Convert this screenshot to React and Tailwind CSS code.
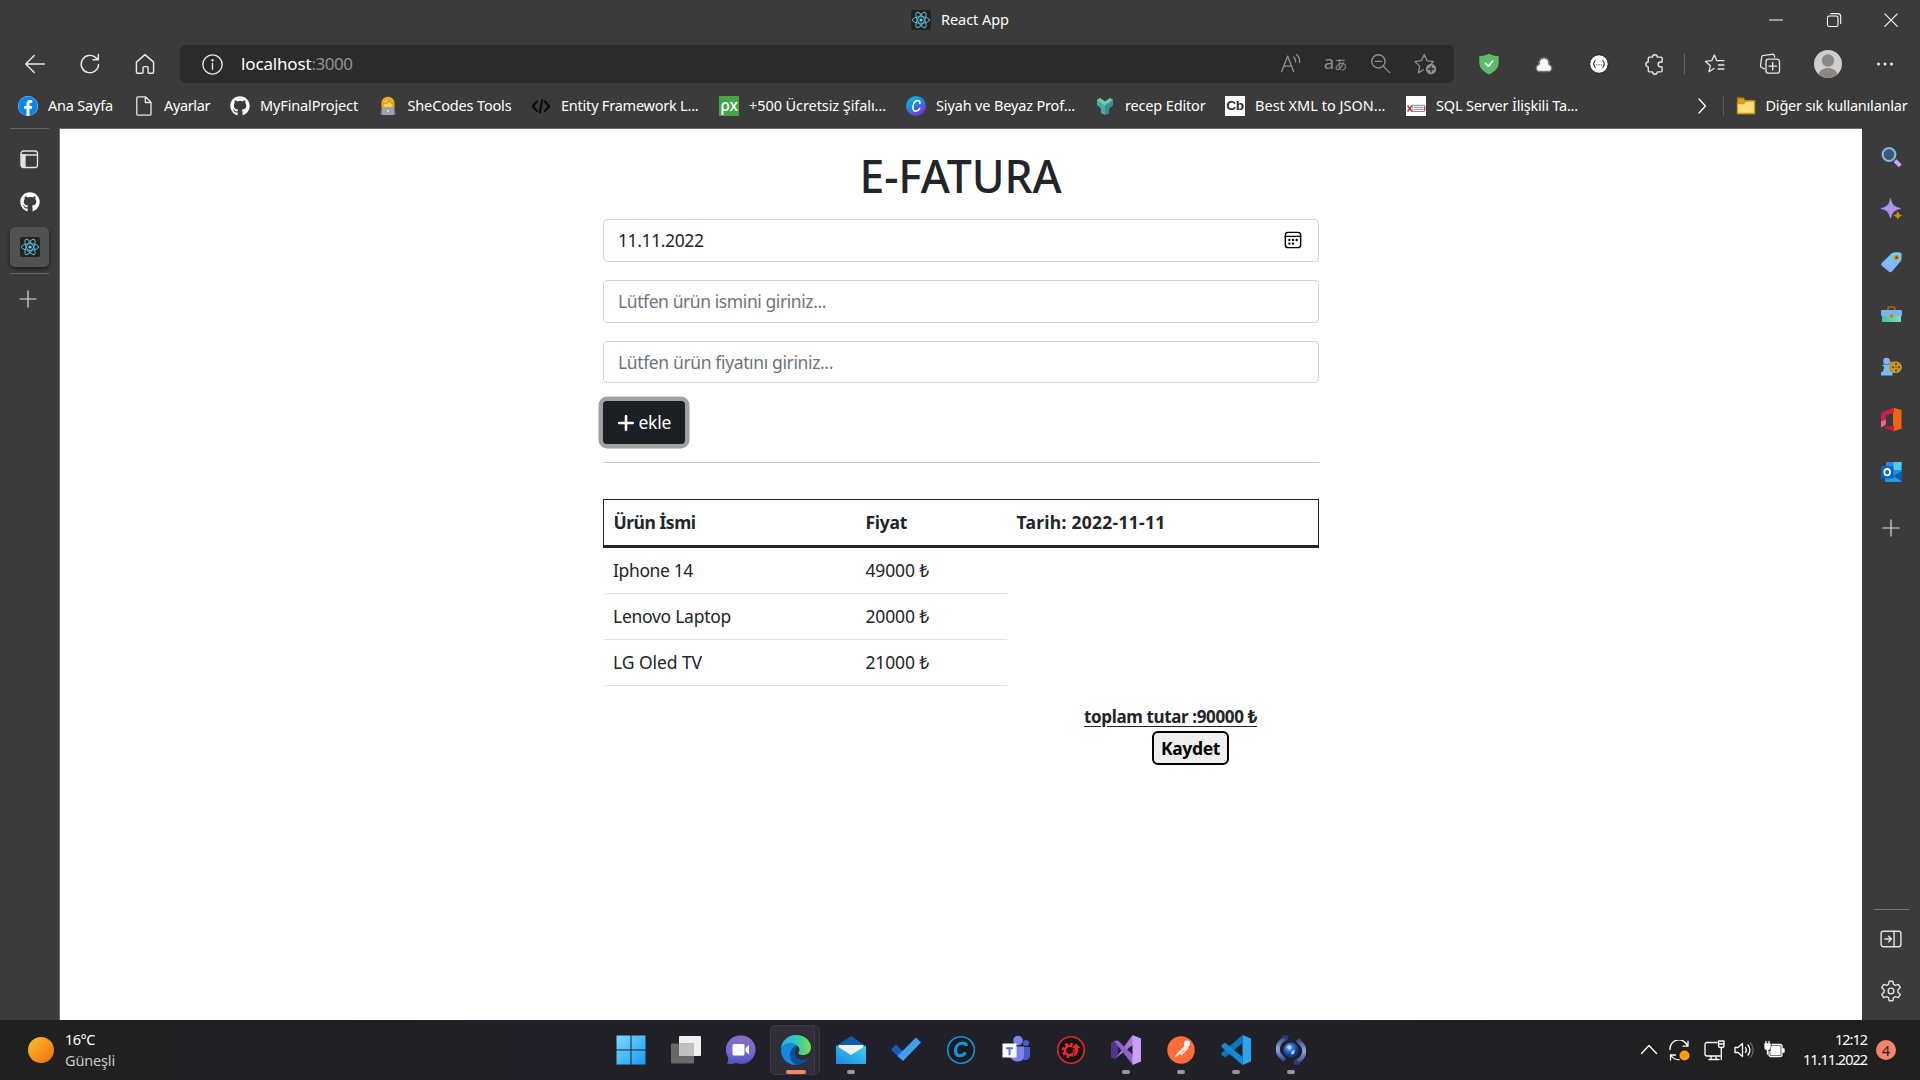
import { useLayoutEffect, useRef, useState } from "react";
import { FaGithub, FaFacebook } from "react-icons/fa";

/* Text run that is tracked to occupy the given width. */
function T({ w, className = "", children }) {
  const ref = useRef(null);
  const [ls, setLs] = useState(0);
  useLayoutEffect(() => {
    const n = ref.current.textContent.length;
    setLs((w - ref.current.getBoundingClientRect().width) / n);
  }, [w]);
  return (
    <span ref={ref} className={`inline-block whitespace-pre ${className}`} style={{ letterSpacing: `${ls}px` }}>
      {children}
    </span>
  );
}

function Svg({ s = 20, vb = "0 0 20 20", className = "", children }) {
  return (
    <svg width={s} height={s} viewBox={vb} fill="none" stroke="currentColor" strokeWidth="1.3" strokeLinecap="round" strokeLinejoin="round" className={`shrink-0 ${className}`}>
      {children}
    </svg>
  );
}

function ReactLogo() {
  return (
    <Svg>
      <rect width="20" height="20" rx="2" fill="#222222" stroke="none" />
      <g stroke="#5cb8d0" strokeWidth="1">
        <ellipse cx="10" cy="10" rx="8.6" ry="3.3" />
        <ellipse cx="10" cy="10" rx="8.6" ry="3.3" transform="rotate(60 10 10)" />
        <ellipse cx="10" cy="10" rx="8.6" ry="3.3" transform="rotate(120 10 10)" />
      </g>
      <circle cx="10" cy="10" r="1.6" fill="#61dafb" stroke="none" />
    </Svg>
  );
}

function TitleBar() {
  return (
    <div className="flex h-[45px] items-start">
      <div className="ml-[911px] flex h-10 w-[200px] items-center gap-[10px]">
        <ReactLogo />
        <T w={68} className="text-[14.5px] text-white">React App</T>
      </div>
      <div className="ml-auto flex h-[39px] text-white">
        {[
          <path key="m" d="M3.5 10H16.5" />,
          <g key="r"><rect x="3.5" y="6" width="10.5" height="10.5" rx="1.8" /><path d="M6.5 3.6h7.2a3 3 0 0 1 3 3v7" /></g>,
          <path key="c" d="M3.8 3.8l12.5 12.5M16.3 3.8L3.8 16.3" />,
        ].map((g, i) => (
          <div key={i} className="flex w-[57.5px] items-center justify-center">
            <Svg><g strokeWidth="1.1">{g}</g></Svg>
          </div>
        ))}
      </div>
    </div>
  );
}

const Cell = ({ className, children }) => (
  <div className={`flex shrink-0 items-center justify-center ${className}`}>{children}</div>
);

function Toolbar() {
  return (
    <div className="flex h-[38px] items-center text-[#e8e8e8]">
      <Cell className="ml-[7px] w-[55px] pb-px"><Svg s={22}><path d="M18.5 10H1.8M9.3 2.3L1.6 10l7.7 7.7" /></Svg></Cell>
      <Cell className="w-[55px] pb-px"><Svg s={22}><path d="M17.8 10.5a7.9 7.9 0 1 1-2.6-6.3l1.8 1.6M17.6 1.4v4.8h-4.8" /></Svg></Cell>
      <Cell className="w-[55px] pb-px"><Svg s={22}><path d="M2.2 8.3L10 1.5l7.8 6.8v9.1a1 1 0 0 1-1 1h-3.2a.8.8 0 0 1-.8-.8v-4.2a1 1 0 0 0-1-1H9.2a1 1 0 0 0-1 1v4.2a.8.8 0 0 1-.8.8H3.2a1 1 0 0 1-1-1z" /></Svg></Cell>
      <div className="ml-2 flex h-[38px] w-[1274px] items-center rounded-[5px] bg-[#2b2b2b]">
        <Cell className="ml-[21px] w-[22px]">
          <Svg s={21}><circle cx="10" cy="10" r="9.2" /><path d="M10 9v5.5" /><circle cx="10" cy="6" r=".5" fill="currentColor" /></Svg>
        </Cell>
        <div className="ml-[18px] flex pb-px text-[17px]">
          <T w={70.5} className="text-white">localhost</T>
          <T w={41} className="text-[#929292]">:3000</T>
        </div>
        <div className="ml-auto mr-[6px] flex pb-[2px] text-[#8f8f8f]">
          <Cell className="w-[45px]">
            <Svg s={21}><path d="M1.5 17.8L7.3 3l5.8 14.8M3.6 12.5h7.4M13 3.8c1.5 1.2 2 2.8 1.8 4.5M15.6 1.5c2.5 2 3.4 4.8 3 7.6" /></Svg>
          </Cell>
          <Cell className="w-[45px]">
            <span className="flex items-baseline font-['Noto_Sans','Noto_Sans_CJK_JP',sans-serif] text-[18.5px] leading-5"><span>a</span><span className="text-[13px]">あ</span></span>
          </Cell>
          <Cell className="w-[45px]"><Svg s={21}><circle cx="8" cy="8" r="6.3" /><path d="M12.7 12.7l6 6M5 8h6" /></Svg></Cell>
          <Cell className="w-[45px] pt-px">
            <Svg s={23} vb="0 0 22 22">
              <path d="M9 17l-4.800 2.900 1.200-6.400L1 9.200l6-.9L9.800 2.500l2.700 5.800 6 .9-2 2" />
              <circle cx="16.3" cy="16.3" r="5" fill="#8f8f8f" stroke="none" />
              <path d="M16.3 13.7v5.2M13.7 16.3h5.2" stroke="#2b2b2b" />
            </Svg>
          </Cell>
        </div>
      </div>
      <Cell className="ml-[7px] w-[55px] pb-px">
        <Svg s={22}><path d="M10 .6c2.700 1.600 5.500 2.200 8.800 2.200v6.400c0 4.600-3.800 8-8.800 10.400C5 17.200 1.200 13.800 1.200 9.200V2.800C4.500 2.800 7.300 2.200 10 .6z" fill="#5dbb6e" stroke="none" /><path d="M6.800 9.300l2.600 2.700 4-4.800" stroke="#fff" strokeWidth="1.5" /></Svg>
      </Cell>
      <Cell className="w-[55px]">
        <Svg><path d="M10 5.500a3.600 3.600 0 0 1 3.500 4.300c-.3 1.300.5 1.800 1.500 2.500 1.800 1.200 1.200 3.700-.8 3.700H5.800c-2 0-2.600-2.500-.8-3.700 1-.7 1.800-1.200 1.500-2.500A3.600 3.600 0 0 1 10 5.500z" fill="#777" stroke="#777" strokeWidth="4.500" /><path d="M10 4.700a3.900 3.900 0 0 1 3.900 4.600c-.3 1.400.8 1.900 2 2.600 2 1.300 1.300 4.800-1.200 4.800H5.300c-2.500 0-3.200-3.500-1.200-4.800 1.200-.7 2.300-1.200 2-2.600A3.900 3.900 0 0 1 10 4.700z" fill="#fff" stroke="none" /></Svg>
      </Cell>
      <Cell className="w-[55px]">
        <Svg><circle cx="10" cy="10" r="9.300" fill="#fff" stroke="#1b1b1b" strokeWidth="1" /><g stroke="#222" strokeWidth="1.100"><path d="M6.300 6.800c-1.600 0-.6 2.400-1.900 3.200 1.300.8.3 3.300 1.900 3.300M13.700 6.800c1.600 0 .6 2.400 1.900 3.200-1.300.8-.3 3.300-1.900 3.300M7.800 10.800h.1M10 10.800h.1M12.200 10.800h.1" /></g></Svg>
      </Cell>
      <Cell className="w-[55px]">
        <Svg s={21} vb="-.5 .5 20 20"><path d="M5.500 3.500h3a2.300 2.300 0 0 1 4.600 0h3.600a1 1 0 0 1 1 1v3.600h-1.500a2.300 2.300 0 0 0 0 4.600h1.500v3.800a1 1 0 0 1-1 1h-3.500a2.300 2.300 0 0 1-4.600 0H5.500a1 1 0 0 1-1-1v-3.800a2.300 2.300 0 0 1 0-4.600V4.500a1 1 0 0 1 1-1z" /></Svg>
      </Cell>
      <div className="ml-[3px] h-5 w-px bg-[#6a6a6a]" />
      <Cell className="ml-[2px] w-[55px] pb-px">
        <Svg s={22} vb="0 0 22 22"><path d="M10 15.500l-5 3.200 1.300-6L1.500 8.400l6.200-.7L10.300 2l2.500 5.700H20M14.500 12H20M14 16h6" /></Svg>
      </Cell>
      <Cell className="w-[55px]">
        <Svg s={22} vb="0 0 22 22"><path d="M5.500 15.800L2.500 14.500a2 2 0 0 1-1-2L2.700 4a2 2 0 0 1 2-1.700l8.500-1a2 2 0 0 1 2.200 1.500l.2 1.200" /><rect x="7" y="6.200" width="13.500" height="14" rx="2.500" /><path d="M13.700 9.500v7.500M10 13.200h7.500" /></Svg>
      </Cell>
      <Cell className="w-[61px]">
        <Svg s={28} vb="0 0 28 28"><circle cx="14" cy="14" r="14" fill="#d0cecc" stroke="none" /><circle cx="14" cy="10.500" r="6.200" fill="#8b8785" stroke="none" /><path d="M4.500 24.300c1-4 5-6.300 9.500-6.300s8.500 2.300 9.500 6.300A14 14 0 0 1 14 28a14 14 0 0 1-9.500-3.700z" fill="#8b8785" stroke="none" /></Svg>
      </Cell>
      <Cell className="w-[54px]"><Svg><g fill="#e8e8e8" stroke="none"><circle cx="3.500" cy="10" r="1.500" /><circle cx="10" cy="10" r="1.500" /><circle cx="16.500" cy="10" r="1.500" /></g></Svg></Cell>
    </div>
  );
}

const canva = (
  <Svg><defs><linearGradient id="cv" x1="0" y1="0" x2=".6" y2="1"><stop stopColor="#00c4cc" /><stop offset=".5" stopColor="#1d8ce0" /><stop offset="1" stopColor="#7d2ae8" /></linearGradient></defs><circle cx="10" cy="10" r="10" fill="url(#cv)" stroke="none" /><path d="M13.800 7.500c.4-2-.6-3-2-3-2.500 0-5 3.300-5 6.800 0 2.500 1 4 3 4 1.800 0 3-1.200 3.900-2.800" stroke="#fff" strokeWidth="1.600" /></Svg>
);

const bookmarks = [
  ["Ana Sayfa", 65, "w-[116px]", <span className="flex rounded-full bg-white"><FaFacebook size={20} color="#0a84f5" /></span>],
  ["Ayarlar", 46, "w-[96px]", <Svg><path d="M4 .8h7.500L17 6.300V18a1.200 1.200 0 0 1-1.200 1.200H4A1.200 1.200 0 0 1 2.800 18V2A1.200 1.200 0 0 1 4 .8zM11.300 1v5.500H17" stroke="#e8e8e8" /></Svg>],
  ["MyFinalProject", 98, "w-[147.5px]", <FaGithub size={20} color="#fff" />],
  ["SheCodes Tools", 104, "w-[153.5px]", <Svg><path d="M3.500 10C2.500 4.500 5.500.8 10 .8s7.500 3.700 6.500 9.200v2.500h-13z" fill="#e8a91c" stroke="none" /><circle cx="10" cy="8" r="4.300" fill="#ffd95a" stroke="none" /><path d="M5.300 7.500C9 7.500 10.500 5.500 11 4.200c.8 1.800 2 3 3.800 3.300" stroke="#e09a12" strokeWidth="1.700" /><path d="M2.500 19v-3.500c0-2 3-3 7.500-3s7.500 1 7.500 3V19z" fill="#4d62c9" stroke="none" /><rect x="3.800" y="11" width="12.400" height="8" rx="1" fill="#a1a3a6" stroke="none" /><circle cx="10" cy="15" r=".9" fill="#eee" stroke="none" /></Svg>],
  ["Entity Framework L...", 137.5, "w-[188px]", <Svg><path d="M6 5.500L1.800 10.300 6 15M14 5.500l4.200 4.800L14 15M11.300 4L8.700 16.500" stroke="#0a0a0a" strokeWidth="2.200" /></Svg>],
  ["+500 Ücretsiz Şifalı...", 137, "w-[187px]", <span className="flex size-5 items-center justify-center bg-[#46a546] pb-[2px] text-[15.5px] font-medium leading-5 tracking-[-.5px] text-white">ρx</span>],
  ["Siyah ve Beyaz Prof...", 139, "w-[189px]", canva],
  ["recep Editor", 80.5, "w-[130px]", <Svg><g stroke="none"><path d="M2 4l3-2 5 3.500L15 2l3 2v5l-4 3.500V17l-4 2-4-2v-4.500L2 9z" fill="#4ba8a0" /><path d="M2 4l3-2 5 3.500L15 2l3 2-8 5.500z" fill="#72c7a4" /><path d="M10 9.500V19l4-2v-4.500L18 9V4z" fill="#3a8f94" /></g></Svg>],
  ["Best XML to JSON...", 130.5, "w-[181px]", <span className="flex size-5 items-center justify-center bg-white font-['Liberation_Sans',sans-serif] text-[13.5px] font-bold leading-5 tracking-[-.3px] text-[#2c2c2c]">Cb</span>],
  ["SQL Server İlişkili Ta...", 142, "w-[180px]", <Svg><rect width="20" height="20" fill="#fff" stroke="none" /><path d="M1.500 9.500l4.500 6M6 9.500l-4.500 6" stroke="#b03a3a" strokeWidth="1.500" strokeLinecap="butt" /><path d="M6.500 9.300h12v6.200h-12zM8 11.300h9M8 13.400h9" stroke="#8a8a8a" strokeWidth="1" /><path d="M19 11v3" stroke="#b03a3a" strokeWidth="1" /></Svg>],
];

function Bookmarks() {
  return (
    <div className="flex h-[45px] items-center pl-[18px] text-[14.5px] text-white">
      {bookmarks.map(([label, w, cell, icon]) => (
        <div key={label} className={`flex shrink-0 items-center gap-[10px] ${cell}`}>
          <span className="flex size-5 shrink-0 items-center justify-center">{icon}</span>
          <T w={w}>{label}</T>
        </div>
      ))}
      <div className="ml-auto flex items-center pr-[12.5px]">
        <Svg><path d="M6 3l6.500 7L6 17" /></Svg>
        <div className="ml-[10px] h-5 w-px bg-[#5c5c5c]" />
        <Svg className="ml-3 mr-[10px]"><path d="M1.500 2h6l2 3h9v12.500h-17z" fill="#d9a514" stroke="#a77900" /><path d="M1.500 7.500h6L9.800 5h8.700v12.500h-17z" fill="#fddc7c" stroke="#c99a1d" /></Svg>
        <T w={142}>Diğer sık kullanılanlar</T>
      </div>
    </div>
  );
}

const PlusIcon = () => <Svg s={18}><path d="M10 1v18M1 10h18" /></Svg>;

function LeftRail() {
  return (
    <div className="flex w-[59px] flex-col items-start pl-[10px] text-[#e2e2e2]">
      <div className="h-px w-[39px] bg-[#666]" />
      <Cell className="mt-5 h-5 w-[37px]"><Svg><rect x="2" y="2" width="16.500" height="16.500" rx="2.500" /><path d="M2 6h16.500" /><path d="M2.500 6H6v12H3.500a1 1 0 0 1-1-1z" fill="currentColor" /></Svg></Cell>
      <Cell className="mt-[23px] h-5 w-[40px]"><FaGithub size={20} color="#fff" /></Cell>
      <Cell className="mt-[15px] h-10 w-[39px] rounded-[5px] bg-[#515151] shadow-[0_2px_4px_rgba(0,0,0,0.5)]"><ReactLogo /></Cell>
      <div className="mt-[6px] h-px w-[39px] bg-[#666]" />
      <Cell className="mt-4 h-[18px] w-[36px]"><PlusIcon /></Cell>
    </div>
  );
}

const railIcons = [
  <g key="s"><circle cx="8" cy="7.500" r="6.300" stroke="#7cb8f5" strokeWidth="2.300" /><circle cx="8" cy="7.500" r="5" fill="#3f5a6d" stroke="none" /><path d="M14 13.700l5.300 5" stroke="#c9a5f2" strokeWidth="4" strokeLinecap="butt" /></g>,
  <g key="k" stroke="none"><path d="M9.500 0c1.500 6 3.500 8 10 9.500-6.500 1.500-8.500 3.500-10 9.500C8 13 6 11 0 9.500 6 8 8 6 9.500 0z" fill="url(#spark)" stroke="url(#spark)" strokeWidth=".8" /><path d="M16.800 12c.8 2.700 1.700 3.700 4.400 4.500-2.700.8-3.600 1.800-4.400 4.500-.8-2.700-1.700-3.700-4.400-4.500 2.700-.8 3.600-1.800 4.400-4.500z" fill="#c98f0a" /></g>,
  <g key="t" stroke="none"><path d="M10.500 1.500C12 .3 17 0 19 .6c1.500.5 1.600 1 1.600 2.400 0 3 0 5-1 6.200L11 19.500c-.9 1-2 1-3 .2L1 14c-1-.9-1.100-2-.2-3z" fill="url(#tag)" /><circle cx="15.500" cy="5.500" r="2.600" fill="#e08a00" /><circle cx="15.500" cy="5.500" r="1.100" fill="#553300" /></g>,
  <g key="b" stroke="none"><path d="M7 7V4.500A1.500 1.500 0 0 1 8.500 3h4A1.500 1.500 0 0 1 14 4.500V7" stroke="#a56f08" strokeWidth="1.500" fill="none" /><path d="M1 10h19v8H1z" fill="url(#cse)" /><rect x="0" y="6" width="21" height="6" rx="1.200" fill="#7db4ee" /><circle cx="10.500" cy="12" r="1.900" fill="#c48a13" /></g>,
  <g key="c" stroke="none"><path d="M8 4.500h7a5.700 5.700 0 0 1 0 11.400H8z" fill="#b88a26" /><circle cx="15" cy="10.200" r="5.700" fill="#c8962a" /><g fill="#44381c"><circle cx="15" cy="7" r="1" /><circle cx="18" cy="10.200" r="1" /><circle cx="12" cy="10.200" r="1" /><circle cx="15" cy="13.400" r="1" /><circle cx="15" cy="10.200" r=".6" /></g><circle cx="5.500" cy="4" r="3.300" fill="#7fb9f5" /><path d="M1.500 7.500h8v1.700H8c0 3 .6 4.500 1.500 5.800h2v3.500H0V15h1.500C2.400 13.700 3 12.200 3 9.200H1.500z" fill="#7fb9f5" /></g>,
  <g key="o" stroke="none"><path d="M12 -1.500L20.500 1v18.500L12 22.500z" fill="#ef6512" /><path d="M13 -1.500v5L4.800 6.500v9L0 18.500V6c0-1.500.7-2.200 2-3z" fill="#cf1f42" /><path d="M0 12.500l4.800-2v5L0 18.500z" fill="#e56a9a" /><path d="M4 17.500l9-.5v5.500l-9-3.500z" fill="#c21d30" /></g>,
  <g key="l" stroke="none"><rect x="5" y="0" width="15.500" height="14" fill="#1e90df" /><path d="M12.500 0h8v8h-8z" fill="#4fc9f8" /><path d="M4 12l8 2 9-5v10a1 1 0 0 1-1 1H5a1 1 0 0 1-1-1z" fill="#1d9ce8" /><path d="M21 9v10.500L12.500 14z" fill="#0b5da3" /><rect x="0" y="4" width="12.500" height="12.500" rx="1" fill="#0c64c0" /><ellipse cx="6.200" cy="10.200" rx="2.800" ry="3.200" fill="none" stroke="#fff" strokeWidth="1.800" /></g>,
];

function RightRail() {
  return (
    <div className="flex w-[58px] flex-col items-center pt-[3px] text-[#e2e2e2]">
      <svg width="0" height="0" className="absolute">
        <defs>
          <linearGradient id="spark" x1="0" y1="0" x2="1" y2="1"><stop stopColor="#6ab5ff" /><stop offset=".5" stopColor="#c08bf2" /><stop offset="1" stopColor="#9fa5f8" /></linearGradient>
          <linearGradient id="tag" x1="0" y1="0" x2="0" y2="1"><stop stopColor="#6fd3f5" /><stop offset="1" stopColor="#8cabfb" /></linearGradient>
          <linearGradient id="cse" x1="0" y1="0" x2="1" y2="0"><stop stopColor="#48c4ae" /><stop offset="1" stopColor="#7ce0ad" /></linearGradient>
        </defs>
      </svg>
      {railIcons.map((g, i) => (
        <Cell key={i} className="h-[52.5px] w-full pl-px"><Svg s={21} vb="0 0 21 21" className="overflow-visible">{g}</Svg></Cell>
      ))}
      <Cell className="mt-[18px] h-[22px] w-full"><PlusIcon /></Cell>
      <div className="mt-auto h-px w-[35px] bg-[#757575]" />
      <Cell className="mt-[18px] h-[22px] w-full">
        <Svg s={22}><rect x="1" y="3" width="18" height="14" rx="2" /><path d="M12.800 3v14M4.500 10h5.500M7.800 7.500l2.500 2.500-2.500 2.500" /></Svg>
      </Cell>
      <Cell className="mb-[18px] mt-[30px] h-[22px] w-full">
        <Svg s={22}><path d="M8.300 1.200h3.400l.6 2.700 1.700 1 2.700-.9 1.700 3-2.100 1.800v2.400l2.100 1.800-1.700 3-2.700-.9-1.700 1-.6 2.700H8.300l-.6-2.700-1.700-1-2.700.9-1.700-3 2.100-1.800V8.800L1.600 7l1.700-3 2.700.9 1.700-1z" /><circle cx="10" cy="10" r="2.600" /></Svg>
      </Cell>
    </div>
  );
}

const field = "flex items-center justify-between rounded-[4px] border border-[#ced4da] pl-[14px] pr-[16px] text-[17.5px]";
const rows = [["Iphone 14", 80, "49000 ₺"], ["Lenovo Laptop", 118, "20000 ₺"], ["LG Oled TV", 89, "21000 ₺"]];

function Invoice() {
  return (
    <main className="flex w-[1803px] shrink-0 flex-col items-center border-l border-t border-[#6b6b6b] bg-white text-[#212529]">
      <div className="flex w-[716px] flex-col">
        <h1 className="mt-[20px] flex h-[54px] items-center justify-center pr-px pt-px text-[44.5px] font-medium leading-none">
          <T w={202}>E-FATURA</T>
        </h1>
        <div className={`mt-4 h-[43px] ${field}`}>
          <T w={85.5}>11.11.2022</T>
          <Svg s={18} className="-mt-px text-black"><rect x="1.500" y="1.500" width="17" height="17" rx="3" strokeWidth="1.600" /><path d="M1.500 6h17" strokeWidth="1.600" /><g fill="#000" stroke="none"><circle cx="6" cy="10" r="1.300" /><circle cx="10" cy="10" r="1.300" /><circle cx="14" cy="10" r="1.300" /><circle cx="6" cy="14" r="1.300" /><circle cx="10" cy="14" r="1.300" /></g></Svg>
        </div>
        <div className={`mt-[18px] h-[43px] text-[#6c757d] ${field}`}><T w={208}>Lütfen ürün ismini giriniz...</T></div>
        <div className={`mt-[18px] h-[42px] text-[#6c757d] ${field}`}><T w={215}>Lütfen ürün fiyatını giriniz...</T></div>
        <button className="mt-[18px] flex h-[43px] w-[82px] items-center gap-[4.5px] rounded-[4px] bg-[#1c1f23] pl-[15px] text-[17.5px] text-white shadow-[0_0_0_4.5px_#a0a2a3]">
          <Svg s={16}><path d="M10 1.500v17M1.500 10h17" strokeWidth="3.200" /></Svg>
          <T w={32.5}>ekle</T>
        </button>
        <div className="mt-[18px] h-px bg-[#c7c8c9]" />
        <div className="mt-9 grid h-[49px] grid-cols-[252px_151px_1fr] items-center border border-b-[3px] border-[#212529] pl-[9.5px] text-[17.5px] font-bold">
          <T w={82} className="justify-self-start">Ürün İsmi</T>
          <T w={41.5} className="justify-self-start">Fiyat</T>
          <T w={149} className="justify-self-start">Tarih: 2022-11-11</T>
        </div>
        {rows.map(([name, w, price]) => (
          <div key={name} className="ml-px grid h-[46px] w-[403px] grid-cols-[252.5px_1fr] items-center border-b border-[#dee2e6] pl-[9px] text-[17.5px]">
            <T w={w} className="justify-self-start">{name}</T>
            <T w={63.5} className="justify-self-start">{price}</T>
          </div>
        ))}
        <div className="mt-[18px] flex h-[26px] items-center pl-[481px] text-[17px] font-bold">
          <T w={173} className="underline underline-offset-[3px]">toplam tutar :90000 ₺</T>
        </div>
        <button className="ml-[549px] mt-px flex h-[34px] w-[77px] items-center justify-center rounded-[6px] border-2 border-black bg-[#efefef] pt-px text-[17.5px] font-bold text-black">
          <T w={59}>Kaydet</T>
        </button>
      </div>
    </main>
  );
}

const taskIcons = [
  ["start", 0, <g fill="url(#win)"><path d="M.5.500h14v14H.5zM15.500.500h14v14h-14zM.5 15.500h14v14H.5zM15.500 15.500h14v14h-14z" /></g>],
  ["tasks", 0, <g><rect x="8" y="1" width="22" height="20" rx="1" fill="#f0f0f0" /><rect x="0" y="8.500" width="23" height="20" rx="1" fill="#707070" opacity=".9" /><path d="M8 8.500h15V21H8z" fill="#c0c0c0" /></g>],
  ["chat", 0, <g><path d="M15 .5a14.300 14.300 0 1 1-5 27.600c-3 1.300-7 1.400-9.300.4 1.200-1.500 1.700-3.500 1.500-6A14.300 14.300 0 0 1 15 .5z" fill="url(#chat)" /><rect x="6.500" y="9" width="12" height="11.500" rx="1.500" fill="#fff" /><path d="M19.500 13l3.500-3v9.500l-3.500-3z" fill="#fff" /></g>],
  ["edge", 2, <g><path d="M0 15C0 6 7 0 15 0c9 0 15 6 15 12.500 0 5-4 7.500-8 7.500-4.500 0-5-1.500-4-3 1.500-2.500 0-6-4-7.500C8 7.500 1 10 0 15z" fill="url(#edgeTop)" /><path d="M0 15C.5 9.500 7 6.500 12.500 8.500c2 .8 3 2 3.500 2.800-3.500-.3-6 3-5.500 7 .8 6 7.500 8.500 13.500 6.500-2 3-5.500 5.200-9 5.200-9 0-15-7-15-15z" fill="#1787dc" /><path d="M16 11.300c-4.500.7-8.500 5.500-7 11 1 4 3.500 6.500 6.500 7.700 5 0 9.500-2.500 11.500-6.500-6 3-13 .5-13-5.500 0-3 1-5.500 2-6.700z" fill="#0d4f9e" /></g>],
  ["mail", 1, <g><path d="M0 11L15 1l15 10v3H0z" fill="#0f5cab" /><path d="M2.500 10h25v10h-25z" fill="#f2f2f2" /><path d="M0 10.500l15 9.500L30 10.500V28a1 1 0 0 1-1 1H1a1 1 0 0 1-1-1z" fill="url(#mail)" /></g>],
  ["todo", 0, <g><path d="M0 14.500L5 9.500l9 9-5 5z" fill="#185abd" /><path d="M6.500 21L25 2.500l5 5L12 26z" fill="#3ea0ee" /></g>],
  ["cc", 0, <g><circle cx="15" cy="15" r="13.300" fill="#171b20" stroke="#1592dc" strokeWidth="1.600" /><path d="M20.500 11c-.3-2-1.700-2.800-4-2.800-4 0-7 3-7 7.500 0 3 1.500 5 4.500 5 2.700 0 4.500-1.200 5.500-3.300" fill="none" stroke="#1592dc" strokeWidth="3.200" /></g>],
  ["teams", 0, <g><circle cx="17" cy="5.500" r="4.800" fill="#7b83eb" /><circle cx="25" cy="8" r="3" fill="#5059c9" /><path d="M20 12h9v8c0 3-2 5-4.500 5S20 23 20 20z" fill="#5059c9" /><path d="M9 11.500h14v9c0 4-3 6-6.500 6S9 24 9 20z" fill="#7b83eb" /><rect x="1.500" y="8.500" width="14" height="14" fill="#fff" /><path d="M5 12.300h7v1.900H9.600v6H7.500v-6H5z" fill="#6b6fce" /></g>],
  ["gear", 0, <g><circle cx="15" cy="15" r="13.200" fill="#141414" stroke="#e02a2a" strokeWidth="1.600" /><circle cx="13.500" cy="15.500" r="6.500" fill="none" stroke="#ee2a2a" strokeWidth="2.400" strokeDasharray="2.800 2.300" /><circle cx="13.500" cy="15.500" r="4.600" fill="none" stroke="#ee2a2a" strokeWidth="2.400" /><path d="M20 8l5.500 5.500h-3c.3 5-2.200 8-7 9 2.500-2.500 3-5 2.700-9H15z" fill="#ee2a2a" stroke="#141414" strokeWidth=".8" /></g>],
  ["vs", 1, <g><path d="M0 8v14l3 2 4-3.500V9.500L3 6z" fill="#52348a" /><path d="M7 20L21.500 0 23 9 3.500 24z" fill="#a578df" /><path d="M3 6l4-.5L22 20v10z" fill="#8e63cd" /><path d="M21.500 0L30 3.500v23L21.500 30z" fill="#cd9dfb" /></g>],
  ["postman", 1, <g><circle cx="15" cy="15" r="13.700" fill="#ff6c37" /><path d="M8 23l3.500-5 7.500-7.500 2 2L14 19z" fill="#fff" /><circle cx="21" cy="8.500" r="3" fill="#fff" /><path d="M15 20l6-6 1-3" stroke="#fff" fill="none" strokeWidth="1.200" /></g>],
  ["code", 1, <g><path d="M21.500 0L30 3.500v23L21.500 30z" fill="#2aa4ee" /><path d="M21.500 0v8L4 22.500l-3.500-2.800V18z" fill="#0a77be" /><path d="M21.500 30v-8L4 7.500.5 10.200V12z" fill="#1489d4" /></g>],
  ["globe", 1, <g><circle cx="15" cy="15" r="7.600" fill="url(#globe)" /><path d="M10.500 12l3-2 2 2-2 3zM16 16l3-1-1 4-3 .5z" fill="#b9d8ff" /><path d="M11 2.500C1.500 6-.5 15 4 20.500l4.500 5" fill="none" stroke="url(#arc)" strokeWidth="4.200" /><path d="M19 27.500C28.500 24 30.500 15 26 9.500l-4.500-5" fill="none" stroke="url(#arc)" strokeWidth="4.200" /><path d="M5 .5h8L10.500 6zM25 29.500h-8L19.500 24z" fill="#2c3a86" /></g>],
];

function Taskbar() {
  return (
    <div className="flex h-[60px] items-center bg-linear-to-r from-[#202020] via-[#21202a] via-45% to-[#202020] text-white">
      <svg width="0" height="0" className="absolute">
        <defs>
          <linearGradient id="win" gradientUnits="userSpaceOnUse" x1="0" y1="0" x2="30" y2="30"><stop stopColor="#7fdcff" /><stop offset="1" stopColor="#1299f5" /></linearGradient>
          <linearGradient id="chat" x1="0" y1="0" x2="0" y2="1"><stop stopColor="#8b6fb8" /><stop offset=".6" stopColor="#6d6ad8" /><stop offset="1" stopColor="#5050b8" /></linearGradient>
          <linearGradient id="edgeTop"><stop stopColor="#2bb5e8" /><stop offset=".5" stopColor="#2cc8c0" /><stop offset="1" stopColor="#78e04a" /></linearGradient>
          <linearGradient id="mail" x1="0" y1="1" x2="1" y2="0"><stop stopColor="#1a88dc" /><stop offset="1" stopColor="#3fd0fa" /></linearGradient>
          <linearGradient id="arc" x1="0" y1="0" x2="0" y2="1"><stop stopColor="#39478f" /><stop offset=".5" stopColor="#93a8d8" /><stop offset="1" stopColor="#39478f" /></linearGradient>
          <radialGradient id="globe" cx=".4" cy=".35"><stop stopColor="#9fcaff" /><stop offset=".5" stopColor="#2f74d8" /><stop offset="1" stopColor="#123a94" /></radialGradient>
        </defs>
      </svg>
      <div className="ml-[28px] size-[26px] rounded-full bg-linear-to-br from-[#f5c02c] to-[#f06a0c]" />
      <div className="ml-[11px] flex w-[538px] flex-col text-[14.5px] leading-[21px]">
        <T w={30} className="self-start">16°C</T>
        <T w={50} className="self-start text-[#c8c8c8]">Güneşli</T>
      </div>
      {taskIcons.map(([id, state, g]) => (
        <div key={id} className="relative flex h-[60px] w-[55px] items-center justify-center">
          {state === 2 && (
            <>
              <div className="absolute left-[6px] top-[5px] h-[50px] w-[46px] rounded-[5px] border border-[#3a3943] bg-[#2a2932]" />
              <div className="absolute left-[2px] top-[5px] h-[50px] w-[45px] rounded-[5px] border border-[#3c3b45] bg-[#302f39]" />
            </>
          )}
          <svg width="30" height="30" viewBox="0 0 30 30" className="relative">{g}</svg>
          {state === 1 && <div className="absolute bottom-[6px] h-1 w-2 rounded-full bg-[#98989c]" />}
          {state === 2 && <div className="absolute bottom-[6px] h-1 w-5 rounded-full bg-[#f5846a]" />}
        </div>
      ))}
      <div className="ml-auto flex items-center">
        <Svg s={20}><path d="M2.500 13.500l7.500-8 7.500 8" /></Svg>
        <Svg s={21} vb="0 0 21 21" className="ml-[10px]"><path d="M1 9.500A9 9 0 0 1 18.500 6M19 1.200v5h-5M1.500 20v-5h5M2 15.500c2 3 5 4.300 8 4.200" /><circle cx="15.500" cy="15.500" r="5" fill="#ff9a0a" stroke="none" /></Svg>
        <Svg s={21} vb="0 0 21 21" className="ml-[14px]"><path d="M13 2.500H3a2 2 0 0 0-2 2V14a2 2 0 0 0 2 2h13M5 19.500h10M7 16v3.500M12 16v3.500M14.500 1h5.500v4.500a2 2 0 0 1-2 2h-1.500a2 2 0 0 1-2-2zM17.300 7.500v12M15 4h5" /></Svg>
        <Svg s={20} className="ml-[9px]"><path d="M1 7.500h3L8.500 3.500v13L4 12.500H1zM11.500 7.500c1 1.500 1 3.500 0 5M14 5c2.300 3 2.300 7 0 10" /><path d="M16.500 3c3.500 4 3.500 10 0 14" stroke="#666" /></Svg>
        <Svg s={21} vb="0 0 21 21" className="ml-[10px]"><path d="M8 4.500h8a2 2 0 0 1 2 2v8a2 2 0 0 1-2 2H7a2 2 0 0 1-2-2v-3" /><path d="M8 6.500h8v8H7v-3z" fill="#fff" /><path d="M18.500 9h1.500v3h-1.500zM1 4h5v3a2.500 2.500 0 0 1-5 0z" fill="#fff" /><path d="M2 1.500V4M5 1.500V4M3.500 9v5" /></Svg>
        <div className="ml-[18px] flex flex-col items-end pb-[2px] text-[14.5px] leading-[20px]">
          <T w={32}>12:12</T>
          <T w={64}>11.11.2022</T>
        </div>
        <div className="ml-[9px] mr-6 flex size-5 items-center justify-center rounded-full bg-[#f5846a] text-[14px] text-[#222]">4</div>
      </div>
    </div>
  );
}

export default function App() {
  return (
    <div className="flex h-[1080px] w-[1920px] flex-col overflow-hidden bg-[#3b3b3b] font-['Noto_Sans','Open_Sans',sans-serif]">
      <TitleBar />
      <Toolbar />
      <Bookmarks />
      <div className="flex min-h-0 flex-1">
        <LeftRail />
        <Invoice />
        <RightRail />
      </div>
      <Taskbar />
    </div>
  );
}
